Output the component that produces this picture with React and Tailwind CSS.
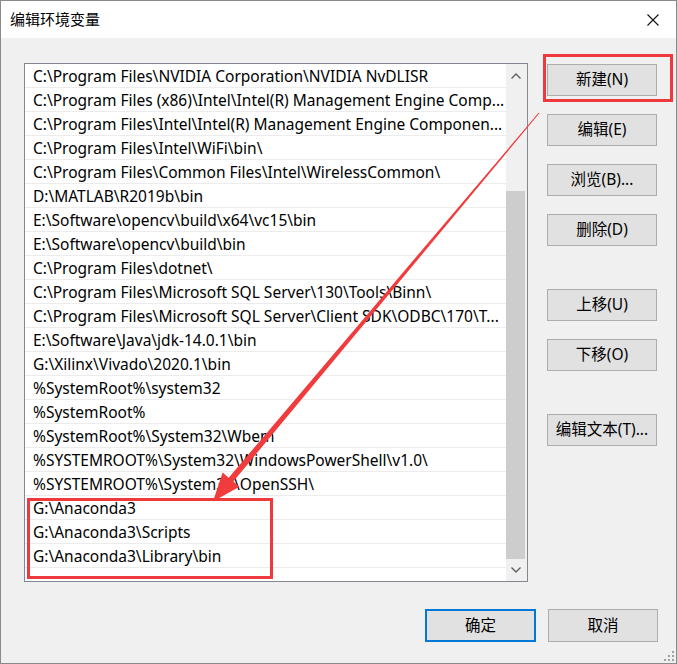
import React from 'react';

const paths = [
  'C:\\Program Files\\NVIDIA Corporation\\NVIDIA NvDLISR',
  'C:\\Program Files (x86)\\Intel\\Intel(R) Management Engine Comp...',
  'C:\\Program Files\\Intel\\Intel(R) Management Engine Componen...',
  'C:\\Program Files\\Intel\\WiFi\\bin\\',
  'C:\\Program Files\\Common Files\\Intel\\WirelessCommon\\',
  'D:\\MATLAB\\R2019b\\bin',
  'E:\\Software\\opencv\\build\\x64\\vc15\\bin',
  'E:\\Software\\opencv\\build\\bin',
  'C:\\Program Files\\dotnet\\',
  'C:\\Program Files\\Microsoft SQL Server\\130\\Tools\\Binn\\',
  'C:\\Program Files\\Microsoft SQL Server\\Client SDK\\ODBC\\170\\T...',
  'E:\\Software\\Java\\jdk-14.0.1\\bin',
  'G:\\Xilinx\\Vivado\\2020.1\\bin',
  '%SystemRoot%\\system32',
  '%SystemRoot%',
  '%SystemRoot%\\System32\\Wbem',
  '%SYSTEMROOT%\\System32\\WindowsPowerShell\\v1.0\\',
  '%SYSTEMROOT%\\System32\\OpenSSH\\',
  'G:\\Anaconda3',
  'G:\\Anaconda3\\Scripts',
  'G:\\Anaconda3\\Library\\bin',
  '',
];

const font = { fontFamily: '"Noto Sans", "Noto Sans CJK SC", sans-serif' };

const Button = ({ children, className = '' }) => (
  <button
    className={`w-[110px] h-[32px] bg-[#e1e1e1] border border-[#adadad] text-[15.5px] text-black leading-none ${className}`}
  >
    {children}
  </button>
);

const App = () => {
  return (
    <div
      className="relative w-[677px] h-[664px] border border-[#8a8a8a] bg-[#f0f0f0] flex flex-col overflow-hidden"
      style={font}
    >
      {/* title bar */}
      <div className="h-[37px] bg-white flex items-center justify-between pl-[9px] pr-[17px]">
        <span className="text-[15px] text-black">编辑环境变量</span>
        <svg width="12" height="12" viewBox="0 0 12 12">
          <path d="M0.5 0.5 L11.5 11.5 M11.5 0.5 L0.5 11.5" stroke="#111" strokeWidth="1.1" />
        </svg>
      </div>

      {/* content */}
      <div className="flex pt-[25px] pl-[23px]">
        <div className="w-[504px] h-[519px] border border-[#828790] bg-white flex">
          <div className="w-[481px] overflow-hidden">
            {paths.map((p, i) => (
              <div
                key={i}
                className="h-[24px] border-b border-[#ececec] pl-[8px] pt-[1px] leading-[23px] text-[15.5px] text-black whitespace-nowrap overflow-hidden"
              >
                {p}
              </div>
            ))}
          </div>
          <div className="w-[21px] bg-[#f0f0f0] flex flex-col">
            <div className="h-[24px] flex items-center justify-center pr-[2px]">
              <svg width="10" height="6" viewBox="0 0 10 6">
                <path d="M0.5 5.5 L5 1 L9.5 5.5" fill="none" stroke="#606060" strokeWidth="1.4" />
              </svg>
            </div>
            <div className="h-[103px]" />
            <div className="w-[19px] h-[368px] bg-[#cdcdcd]" />
            <div className="flex-1 flex items-center justify-center pr-[2px]">
              <svg width="10" height="6" viewBox="0 0 10 6">
                <path d="M0.5 0.5 L5 5 L9.5 0.5" fill="none" stroke="#606060" strokeWidth="1.4" />
              </svg>
            </div>
          </div>
        </div>

        <div className="ml-[19px] pt-[1px] flex flex-col">
          <Button>新建(N)</Button>
          <Button className="mt-[18px]">编辑(E)</Button>
          <Button className="mt-[18px]">浏览(B)...</Button>
          <Button className="mt-[18px]">删除(D)</Button>
          <Button className="mt-[43px]">上移(U)</Button>
          <Button className="mt-[18px]">下移(O)</Button>
          <Button className="mt-[43px]">编辑文本(T)...</Button>
        </div>
      </div>

      {/* footer buttons */}
      <div className="flex justify-end gap-[12px] pt-[27px] pr-[18px]">
        <Button className="!border-2 !border-[#0078d7] !w-[111px] !h-[33px]">确定</Button>
        <Button className="!h-[33px]">取消</Button>
      </div>

      {/* resize grip */}
      <svg className="absolute right-[1px] bottom-[1px]" width="12" height="12" viewBox="0 0 12 12">
        <g fill="#a0a0a0">
          <rect x="9" y="1" width="2" height="2" />
          <rect x="5" y="5" width="2" height="2" />
          <rect x="9" y="5" width="2" height="2" />
          <rect x="1" y="9" width="2" height="2" />
          <rect x="5" y="9" width="2" height="2" />
          <rect x="9" y="9" width="2" height="2" />
        </g>
      </svg>

      {/* annotations */}
      <div className="absolute left-[542px] top-[53px] w-[130px] h-[48px] border-[3px] border-[#ee3a3c]" />
      <div className="absolute left-[26px] top-[497px] w-[246px] h-[81px] border-[3px] border-[#ee3a3c]" />
      <svg className="absolute left-0 top-0 pointer-events-none" width="677" height="664" viewBox="0 0 677 664">
        <polygon
          points="538.4,112.3 232.3,480.5 238.4,485.7 212,500.5 221.6,471.5 227.7,476.7 537.6,111.7"
          fill="#f03c3c"
        />
      </svg>
    </div>
  );
};

export default App;
